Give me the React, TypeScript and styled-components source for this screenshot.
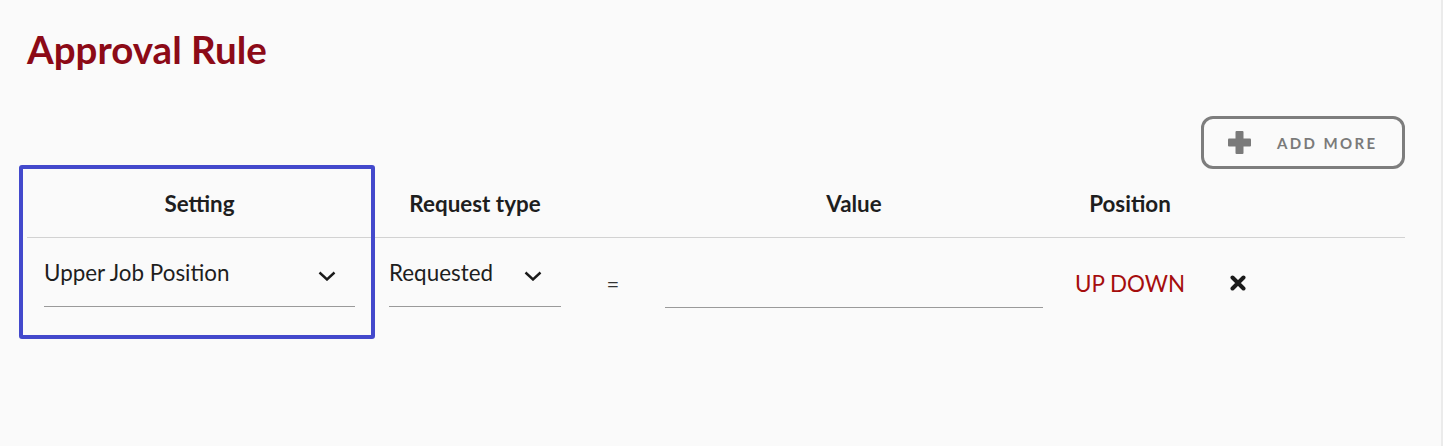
import React, { FC } from "react";
import styled, { createGlobalStyle } from "styled-components";

const GlobalStyle = createGlobalStyle`
  html, body {
    margin: 0;
    padding: 0;
    background: #fafafa;
    font-family: Lato, "Open Sans", sans-serif;
  }
`;

const columns = "345px 206px 70px 412px 140px 75px 1fr";

const Chevron: FC = () => (
  <svg width="18" height="10" viewBox="0 0 18 10" fill="none">
    <polyline points="1.5,1.5 9,8.5 16.5,1.5" stroke="#1a1a1a" strokeWidth="2.4" />
  </svg>
);

const PlusIcon: FC = () => (
  <svg width="23" height="23" viewBox="0 0 23 23">
    <rect x="7.5" y="0" width="8" height="23" rx="1" fill="#7a7a7a" />
    <rect x="0" y="7.5" width="23" height="8" rx="1" fill="#7a7a7a" />
  </svg>
);

const CloseIcon: FC = () => (
  <svg width="16" height="16" viewBox="0 0 16 16">
    <path d="M2.5 2.5 L13.5 13.5 M13.5 2.5 L2.5 13.5" stroke="#1a1a1a" strokeWidth="4" strokeLinecap="round" />
  </svg>
);

const App: FC = () => {
  return (
    <Page>
      <GlobalStyle />
      <Title>Approval Rule</Title>
      <Toolbar>
        <AddButton>
          <PlusIcon />
          <span>ADD MORE</span>
        </AddButton>
      </Toolbar>
      <Table>
        <HeaderRow>
          <HeaderCell>Setting</HeaderCell>
          <HeaderCell>Request type</HeaderCell>
          <HeaderCell />
          <HeaderCell>Value</HeaderCell>
          <HeaderCell>Position</HeaderCell>
          <HeaderCell />
          <HeaderCell />
        </HeaderRow>
        <BodyRow>
          <Cell>
            <Select>
              <span>Upper Job Position</span>
              <Chevron />
            </Select>
          </Cell>
          <Cell>
            <Select>
              <span>Requested</span>
              <Chevron />
            </Select>
          </Cell>
          <Cell $center>
            <Equals>=</Equals>
          </Cell>
          <Cell>
            <ValueInput />
          </Cell>
          <Cell $center>
            <Order>UP DOWN</Order>
          </Cell>
          <Cell $center>
            <CloseIcon />
          </Cell>
          <Cell />
        </BodyRow>
        <Highlight />
      </Table>
    </Page>
  );
};

export default App;

const Page = styled.div`
  min-height: 100vh;
  box-sizing: border-box;
  padding: 0 36px 0 27px;
  border-right: 2px solid #ebebeb;
`;

const Title = styled.h1`
  margin: 0;
  padding-top: 26px;
  font-size: 38.5px;
  line-height: 46px;
  font-weight: 700;
  color: #8c0a17;
`;

const Toolbar = styled.div`
  display: flex;
  justify-content: flex-end;
  margin-top: 44px;
`;

const AddButton = styled.button`
  display: flex;
  align-items: center;
  gap: 26px;
  box-sizing: border-box;
  width: 204px;
  height: 53px;
  padding: 0 0 0 24px;
  border: 3px solid #7d7d7d;
  border-radius: 12px;
  background: transparent;
  color: #7a7a7a;
  font-family: Lato, sans-serif;
  font-size: 15px;
  font-weight: 700;
  letter-spacing: 2.4px;
  cursor: pointer;
`;

const Table = styled.div`
  position: relative;
`;

const HeaderRow = styled.div`
  display: grid;
  grid-template-columns: ${columns};
  height: 68px;
  border-bottom: 1px solid #d2d2d2;
`;

const HeaderCell = styled.div`
  display: flex;
  align-items: center;
  justify-content: center;
  font-size: 22.4px;
  font-weight: 700;
  color: #1e1e1e;
`;

const BodyRow = styled.div`
  display: grid;
  grid-template-columns: ${columns};
  height: 90px;
`;

const Cell = styled.div<{ $center?: boolean }>`
  display: flex;
  align-items: center;
  justify-content: ${(p) => (p.$center ? "center" : "stretch")};
  padding: 0 ${(p) => (p.$center ? 0 : 17)}px 0 ${(p) => (p.$center ? 0 : 17)}px;
`;

const Select = styled.div`
  flex: 1;
  display: flex;
  align-items: center;
  justify-content: space-between;
  box-sizing: border-box;
  height: 48px;
  padding: 0 19px 20px 0;
  border-bottom: 1px solid #9a9a9a;
  font-size: 22.4px;
  color: #1e1e1e;

  svg {
    margin-top: 6px;
  }
`;

const ValueInput = styled.div`
  flex: 1;
  height: 48px;
  border-bottom: 1px solid #9a9a9a;
`;

const Equals = styled.span`
  font-size: 22px;
  color: #333;
`;

const Order = styled.span`
  font-size: 22.4px;
  color: #a50d0d;
`;

const Highlight = styled.div`
  position: absolute;
  left: -8px;
  top: -4px;
  width: 356px;
  height: 174px;
  box-sizing: border-box;
  border: 4px solid #4349cc;
  border-radius: 3px;
  pointer-events: none;
`;
